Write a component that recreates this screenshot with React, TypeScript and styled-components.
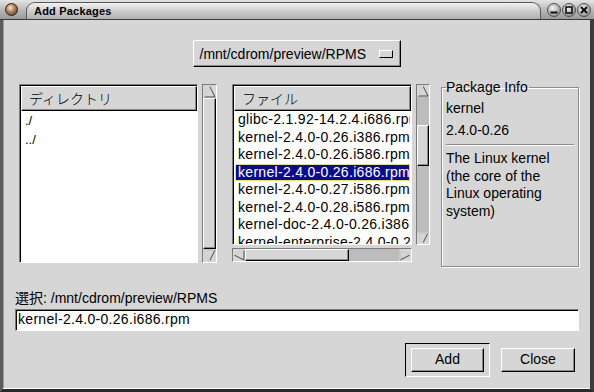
import React from 'react'
import styled, { createGlobalStyle, css } from 'styled-components'

const GlobalStyle = createGlobalStyle`
  html, body {
    margin: 0;
    padding: 0;
    background: #d6d6d6;
  }
  body {
    font-family: "Liberation Sans", "Noto Sans CJK JP", sans-serif;
    font-size: 14px;
    color: #000;
  }
  * {
    box-sizing: border-box;
  }
`

const sunken = css`
  border: 1px solid;
  border-color: #7b7b7b #fff #fff #7b7b7b;
  box-shadow: inset 1px 1px 0 #000;
`

const raised = css`
  border: 1px solid;
  border-color: #fff #000 #000 #fff;
  box-shadow: inset -1px -1px 0 #8a8a8a;
`

const Frame = styled.div`
  display: flex;
  flex-direction: column;
  width: 594px;
  height: 392px;
  overflow: hidden;
  background: #d6d6d6;
`

const TitleBar = styled.div`
  display: flex;
  flex: none;
  align-items: center;
  height: 20px;
  padding: 0 3px 0 5px;
  border-bottom: 1px solid #3a3a3a;
  background: linear-gradient(#e4e4e4, #b6b6b6 55%, #9a9a9a);
`

const Orb = styled.div`
  flex: none;
  width: 13px;
  height: 13px;
  border-radius: 50%;
  border: 1px solid #2e2016;
  background: radial-gradient(circle at 40% 35%, #fbe9d2 0%, #b5865e 40%, #4a2e1a 100%);
`

const TitleTab = styled.div`
  display: flex;
  flex: 1;
  align-items: flex-end;
  align-self: flex-end;
  height: 17px;
  margin: 0 6px 0 8px;
  padding: 0 0 1px 7px;
  border: 1px solid #5a5a5a;
  border-bottom: none;
  border-radius: 9px 9px 0 0;
  background: linear-gradient(#f2f2f2, #cdcdcd 50%, #b0b0b0);
  font-size: 11px;
  font-weight: bold;
  line-height: 13px;
  letter-spacing: 0.2px;
`

const WinButtons = styled.div`
  display: flex;
  gap: 1px;
`

const WinButton = styled.div`
  display: flex;
  align-items: center;
  justify-content: center;
  width: 14px;
  height: 14px;
  border-radius: 50%;
  border: 1px solid #505050;
  background: radial-gradient(circle at 40% 35%, #f4f4f4, #a8a8a8 60%, #707070);
`

const Body = styled.div`
  display: flex;
  flex: 1;
  flex-direction: column;
  padding-top: 20px;
  border-left: 3px solid #5c5c5c;
  border-right: 4px solid #3c3c3c;
  border-bottom: 3px solid #2a2a2a;
  box-shadow: inset 0 -1px 0 #fff, inset 1px 0 0 #9a9a9a;
`

const TopRow = styled.div`
  display: flex;
  justify-content: center;
`

const OptionButton = styled.div`
  ${raised};
  display: flex;
  align-items: center;
  justify-content: space-between;
  width: 208px;
  height: 27px;
  padding: 0 7px 0 6px;
  background: #d6d6d6;
  white-space: nowrap;
`

const OptionMark = styled.div`
  ${raised};
  width: 14px;
  height: 8px;
  box-shadow: none;
`

const MainRow = styled.div`
  display: flex;
  align-items: flex-start;
  height: 187px;
  margin-top: 13px;
  padding-left: 16px;
`

const Group = styled.div<{ $gap: number; $left?: number }>`
  display: flex;
  align-items: flex-start;
  gap: ${({ $gap }) => $gap}px;
  margin-top: 4px;
  margin-left: ${({ $left }) => $left ?? 0}px;
`

const FileColumn = styled.div`
  display: flex;
  flex-direction: column;
  gap: 3px;
`

const ListBox = styled.div<{ $w: number; $h: number }>`
  ${sunken};
  display: flex;
  flex-direction: column;
  width: ${({ $w }) => $w}px;
  height: ${({ $h }) => $h}px;
  overflow: hidden;
  background: #fff;
`

const ListHeader = styled.div`
  ${raised};
  flex: none;
  height: 25px;
  margin: 1px 0 0 1px;
  padding-left: 7px;
  background: #d6d6d6;
  font-family: "Noto Sans CJK JP", sans-serif;
  font-size: 14px;
  font-weight: 300;
  line-height: 22px;
`

const DirRow = styled.div`
  height: 19px;
  padding-left: 5px;
  font-size: 13px;
  line-height: 19px;
`

const FileRow = styled.div<{ $selected?: boolean }>`
  flex: none;
  height: 17.5px;
  margin: 0 1px 0 2px;
  padding-left: 3px;
  line-height: 17px;
  letter-spacing: 0.3px;
  white-space: nowrap;
  overflow: hidden;
  ${({ $selected }) =>
    $selected &&
    css`
      background: #0c0c8a;
      color: #fff;
      outline: 1px solid #f2f200;
      outline-offset: -1px;
    `}
`

const ScrollTrough = styled.div<{ $w: number; $h: number; $vertical: boolean }>`
  ${sunken};
  box-shadow: none;
  display: flex;
  flex-direction: ${({ $vertical }) => ($vertical ? 'column' : 'row')};
  width: ${({ $w }) => $w}px;
  height: ${({ $h }) => $h}px;
  background: #bcbcbc;
`

const ScrollTrack = styled.div<{ $vertical: boolean }>`
  display: flex;
  flex: 1;
  flex-direction: ${({ $vertical }) => ($vertical ? 'column' : 'row')};
`

const Thumb = styled.div<{ $vertical: boolean; $start: number; $size?: number }>`
  ${raised};
  background: #d6d6d6;
  ${({ $vertical, $start, $size }) =>
    $vertical
      ? css`
          margin-top: ${$start}px;
          ${$size ? `height: ${$size}px;` : 'flex: 1;'}
        `
      : css`
          margin-left: ${$start}px;
          ${$size ? `width: ${$size}px;` : 'flex: 1;'}
        `}
`

const ArrowCell = styled.div<{ $size: number }>`
  display: flex;
  flex: none;
  width: ${({ $size }) => $size}px;
  height: ${({ $size }) => $size}px;
  background: #d6d6d6;
`

const InfoFrame = styled.fieldset`
  width: 138px;
  height: 187px;
  margin: 0 0 0 11px;
  padding: 0 4px;
  border: 1px solid #8c8c8c;
  box-shadow: inset 1px 1px 0 #fff, 1px 1px 0 #fff;
  min-inline-size: 0;
`

const InfoLegend = styled.legend`
  margin-left: 0;
  padding: 0 1px 0 0;
  line-height: 14px;
`

const InfoLine = styled.div<{ $top: number }>`
  margin-top: ${({ $top }) => $top}px;
  line-height: 17px;
`

const Separator = styled.div`
  height: 2px;
  margin-top: 5px;
  border-top: 1px solid #8c8c8c;
  border-bottom: 1px solid #fff;
`

const Description = styled.div`
  margin-top: 4px;
  line-height: 17.5px;
`

const SelectionLabel = styled.div`
  margin-top: 23px;
  padding-left: 12px;
  line-height: 17px;
`

const TextField = styled.div`
  ${sunken};
  width: 564px;
  height: 22px;
  margin: 2px 0 0 12px;
  padding-left: 2px;
  background: #fff;
  line-height: 19px;
  letter-spacing: 0.3px;
`

const ButtonRow = styled.div`
  display: flex;
  align-items: center;
  justify-content: flex-end;
  gap: 11px;
  margin-top: 12px;
  padding-right: 15px;
`

const DefaultRing = styled.div`
  display: flex;
  align-items: center;
  justify-content: center;
  width: 85px;
  height: 34px;
  border: 1px solid;
  border-color: #000 #fff #fff #000;
`

const PushButton = styled.div<{ $w: number }>`
  ${raised};
  width: ${({ $w }) => $w}px;
  height: 24px;
  background: #d6d6d6;
  text-align: center;
  line-height: 21px;
`

type Dir = 'up' | 'down' | 'left' | 'right'

const Arrow = ({ dir, size }: { dir: Dir; size: number }) => {
  const s = size
  const m = s / 2
  const shapes: Record<Dir, { pts: string; lit: string }> = {
    up: { pts: `${m},1 ${s - 1},${s - 1} 1,${s - 1}`, lit: `1,${s - 1} ${m},1` },
    down: { pts: `1,1 ${s - 1},1 ${m},${s - 1}`, lit: `${m},${s - 1} 1,1 ${s - 1},1` },
    left: { pts: `1,${m} ${s - 1},1 ${s - 1},${s - 1}`, lit: `1,${m} ${s - 1},1` },
    right: { pts: `1,1 ${s - 1},${m} 1,${s - 1}`, lit: `1,${s - 1} 1,1 ${s - 1},${m}` },
  }
  const { pts, lit } = shapes[dir]
  return (
    <ArrowCell $size={s}>
      <svg width={s} height={s} viewBox={`0 0 ${s} ${s}`}>
        <polygon points={pts} fill="#d6d6d6" stroke="#4a4a4a" strokeWidth="1" />
        <polyline points={lit} fill="none" stroke="#fff" strokeWidth="1" />
      </svg>
    </ArrowCell>
  )
}

interface ScrollBarProps {
  vertical: boolean
  w: number
  h: number
  thumbStart?: number
  thumbSize?: number
}

const ScrollBar = ({ vertical, w, h, thumbStart = 0, thumbSize }: ScrollBarProps) => {
  const a = (vertical ? w : h) - 2
  return (
    <ScrollTrough $w={w} $h={h} $vertical={vertical}>
      <Arrow dir={vertical ? 'up' : 'left'} size={a} />
      <ScrollTrack $vertical={vertical}>
        <Thumb $vertical={vertical} $start={thumbStart} $size={thumbSize} />
      </ScrollTrack>
      <Arrow dir={vertical ? 'down' : 'right'} size={a} />
    </ScrollTrough>
  )
}

const files = [
  'glibc-2.1.92-14.2.4.i686.rpm',
  'kernel-2.4.0-0.26.i386.rpm',
  'kernel-2.4.0-0.26.i586.rpm',
  'kernel-2.4.0-0.26.i686.rpm',
  'kernel-2.4.0-0.27.i586.rpm',
  'kernel-2.4.0-0.28.i586.rpm',
  'kernel-doc-2.4.0-0.26.i386.rpm',
  'kernel-enterprise-2.4.0-0.26.i686.rpm',
]

export default function App() {
  return (
    <>
      <GlobalStyle />
      <Frame>
        <TitleBar>
          <Orb />
          <TitleTab>Add Packages</TitleTab>
          <WinButtons>
            <WinButton>
              <svg width="8" height="8" viewBox="0 0 8 8">
                <rect x="0.5" y="5.5" width="7" height="2" fill="#111" />
              </svg>
            </WinButton>
            <WinButton>
              <svg width="8" height="8" viewBox="0 0 8 8">
                <rect x="1" y="1" width="6" height="6" fill="none" stroke="#111" strokeWidth="1.6" />
              </svg>
            </WinButton>
            <WinButton>
              <svg width="8" height="8" viewBox="0 0 8 8">
                <path d="M1 1 L7 7 M7 1 L1 7" stroke="#111" strokeWidth="2" />
              </svg>
            </WinButton>
          </WinButtons>
        </TitleBar>
        <Body>
          <TopRow>
            <OptionButton>
              /mnt/cdrom/preview/RPMS
              <OptionMark />
            </OptionButton>
          </TopRow>

          <MainRow>
            <Group $gap={4}>
              <ListBox $w={179} $h={179}>
                <ListHeader>ディレクトリ</ListHeader>
                <DirRow>./</DirRow>
                <DirRow>../</DirRow>
              </ListBox>
              <ScrollBar vertical w={15} h={179} />
            </Group>

            <Group $gap={4} $left={15}>
              <FileColumn>
                <ListBox $w={180} $h={161}>
                  <ListHeader>ファイル</ListHeader>
                  {files.map((f, i) => (
                    <FileRow key={f} $selected={i === 3}>
                      {f}
                    </FileRow>
                  ))}
                </ListBox>
                <ScrollBar vertical={false} w={180} h={14} thumbStart={0} thumbSize={104} />
              </FileColumn>
              <ScrollBar vertical w={14} h={161} thumbStart={28} thumbSize={41} />
            </Group>

            <InfoFrame>
              <InfoLegend>Package Info</InfoLegend>
              <InfoLine $top={6}>kernel</InfoLine>
              <InfoLine $top={5}>2.4.0-0.26</InfoLine>
              <Separator />
              <Description>
                The Linux kernel
                <br />
                (the core of the
                <br />
                Linux operating
                <br />
                system)
              </Description>
            </InfoFrame>
          </MainRow>

          <SelectionLabel>選択: /mnt/cdrom/preview/RPMS</SelectionLabel>
          <TextField>kernel-2.4.0-0.26.i686.rpm</TextField>

          <ButtonRow>
            <DefaultRing>
              <PushButton $w={73}>Add</PushButton>
            </DefaultRing>
            <PushButton $w={74}>Close</PushButton>
          </ButtonRow>
        </Body>
      </Frame>
    </>
  )
}
